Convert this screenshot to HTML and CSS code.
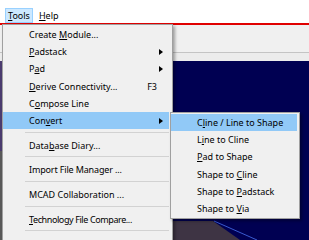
FILE: index.html
```html
<!DOCTYPE html>
<html>
<head>
  <meta charset="UTF-8">
  <title>Tools menu</title>
  <link rel="stylesheet" href="styles.css">
</head>
<body>
  <div class="menubar">
    <div class="menubar-item active"><u>T</u>ools</div>
    <div class="menubar-item"><u>H</u>elp</div>
  </div>

  <div class="workspace">
    <div class="toolbar"></div>
    <div class="canvas">
      <svg width="309" height="179" viewBox="0 0 309 179">
        <rect x="0" y="0" width="2" height="90" fill="#4c3c70"/>
        <rect x="0" y="90" width="2" height="89" fill="#5a5a5a"/>
        <polygon points="173,160 213,160 240,179 173,179" fill="#3e3444"/>
        <line x1="214" y1="160" x2="257" y2="179" stroke="#3a5ad0" stroke-width="1"/>
      </svg>
    </div>
  </div>

  <div class="menu main-menu">
    <div class="item"><span class="label">Create <u>M</u>odule...</span><span class="tail"></span></div>
    <div class="item"><span class="label"><u>P</u>adstack</span><span class="tail arrow"></span></div>
    <div class="item"><span class="label">P<u>a</u>d</span><span class="tail arrow"></span></div>
    <div class="item"><span class="label"><u>D</u>erive Connectivity...</span><span class="key">F3</span><span class="tail"></span></div>
    <div class="item"><span class="label">C<u>o</u>mpose Line</span><span class="tail"></span></div>
    <div class="item hl"><span class="label">Con<u>v</u>ert</span><span class="tail arrow"></span></div>
    <div class="sep"></div>
    <div class="item"><span class="label">Data<u>b</u>ase Diary...</span><span class="tail"></span></div>
    <div class="sep"></div>
    <div class="item"><span class="label narrow">Import File Manager ...</span><span class="tail"></span></div>
    <div class="sep"></div>
    <div class="item"><span class="label">MCAD Collaboration ...</span><span class="tail"></span></div>
    <div class="sep"></div>
    <div class="item"><span class="label narrower"><u>T</u>echnology File Compare...</span><span class="tail"></span></div>
    <div class="sep"></div>
    <div class="item"><span class="label">Package Design Integrity...</span><span class="tail"></span></div>
  </div>

  <div class="menu submenu">
    <div class="item hl"><span class="label">C<u>l</u>ine / Line to Shape</span></div>
    <div class="item"><span class="label">L<u>i</u>ne to Cline</span></div>
    <div class="item"><span class="label"><u>P</u>ad to Shape</span></div>
    <div class="item"><span class="label">Shape to <u>C</u>line</span></div>
    <div class="item"><span class="label">Shape to <u>P</u>adstack</span></div>
    <div class="item"><span class="label">Shape to <u>V</u>ia</span></div>
  </div>
</body>
</html>
```

FILE: styles.css
```css
body { margin: 0; width: 309px; height: 240px; overflow: hidden; position: relative; background: #fff; font-family: "Noto Sans", sans-serif; font-size: 9px; color: #000; }
u { text-decoration: underline; text-underline-offset: 1px; }

.menubar { height: 23px; box-sizing: border-box; padding: 8px 0 0 5px; display: flex; gap: 3px; background: #fff; }
.menubar-item { height: 15px; box-sizing: border-box; padding: 0 2px; border: 1px solid transparent; line-height: 13px; }
.menubar-item.active { background: #cce8ff; border-color: #99d1ff; }

.workspace { border-top: 2px solid #e00000; }
.toolbar { height: 27px; background: #f0f0f0; border-bottom: 1px solid #c4c4c4; box-shadow: 0 8px 0 #ececec; }
.canvas { margin-top: 8px; height: 179px; background: #000052; }
.canvas svg { display: block; }

.menu { position: absolute; background: #f0f0f0; border: 1px solid #a0a0a0; box-shadow: 2px 2px 3px rgba(0,0,0,0.35); }
.main-menu { left: 2px; top: 24px; width: 166px; padding: 1px 3px 0 0; }
.submenu { left: 170px; top: 112px; width: 126px; padding: 1px 2px 1px 0; }

.item { display: flex; align-items: center; padding-left: 26px; white-space: nowrap; }
.main-menu .item { height: 17.2px; padding-right: 6px; }
.submenu .item { height: 17.2px; }
.item.hl { background: #91c9f7; }
.label { flex: 1; }
.narrow { letter-spacing: -0.15px; }
.narrower { letter-spacing: -0.4px; }
.key { margin-right: 2px; }
.tail { width: 4px; height: 7px; }
.arrow { width: 0; height: 0; border-top: 3.5px solid transparent; border-bottom: 3.5px solid transparent; border-left: 4px solid #000; }

.sep { padding: 2.5px 0 4px 22px; }
.sep::before { content: ""; display: block; height: 1px; background: #d2d2d2; }
```
